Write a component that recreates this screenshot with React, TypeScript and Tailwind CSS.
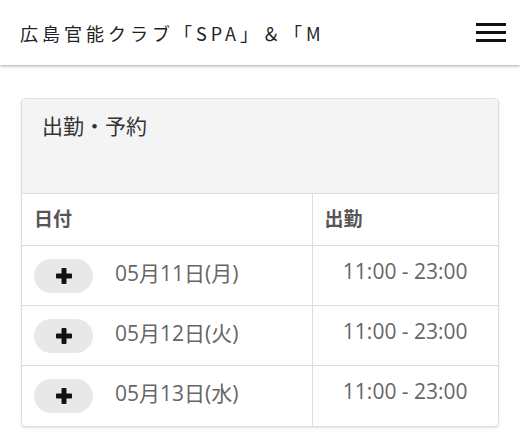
import React from "react";

const rows = [
  { date: "05月11日(月)", time: "11:00 - 23:00" },
  { date: "05月12日(火)", time: "11:00 - 23:00" },
  { date: "05月13日(水)", time: "11:00 - 23:00" },
];

function PlusIcon() {
  return (
    <svg width="18" height="18" viewBox="0 0 18 18" aria-hidden="true">
      <rect x="6.5" y="1" width="5" height="16" rx="1" fill="#111" />
      <rect x="1" y="6.5" width="16" height="5" rx="1" fill="#111" />
    </svg>
  );
}

export default function App() {
  return (
    <div className="w-[520px] h-[439px] bg-white overflow-hidden font-['Open_Sans','Noto_Sans_CJK_JP',sans-serif]">
      <header className="relative z-10 h-[65px] flex items-center justify-between pl-5 pr-[14px] bg-white shadow-[0_1px_3px_rgba(0,0,0,0.35)]">
        <h1 className="whitespace-nowrap text-[18px] tracking-[4px] text-[#222] font-['Noto_Sans_CJK_JP',sans-serif] font-normal leading-[24px]">
          広島官能クラブ「SPA」＆「M
        </h1>
        <button className="flex flex-col gap-[5px] w-[30px]" aria-label="menu">
          <span className="block h-[3px] bg-[#111]" />
          <span className="block h-[3px] bg-[#111]" />
          <span className="block h-[3px] bg-[#111]" />
        </button>
      </header>

      <main className="px-[21px] pt-[33px]">
        <div className="rounded-[4px] border border-[#ddd] overflow-hidden shadow-[0_1px_2px_rgba(0,0,0,0.12)]">
          <div className="h-[94px] bg-[#f4f4f4] px-5 pt-[12px] text-[21px] leading-[30px] text-[#333]">
            出勤・予約
          </div>
          <table className="w-full border-collapse">
            <thead>
              <tr className="h-[52px] border-t border-[#ddd]">
                <th className="w-[290px] px-3 text-left text-[19px] font-bold text-[#555] border-r border-[#ddd]">
                  日付
                </th>
                <th className="px-3 text-left text-[19px] font-bold text-[#555]">出勤</th>
              </tr>
            </thead>
            <tbody>
              {rows.map((r) => (
                <tr key={r.date} className="h-[60px] border-t border-[#ddd]">
                  <td className="px-3 border-r border-[#ddd]">
                    <div className="flex items-center gap-[22px]">
                      <button className="w-[59px] h-[34px] rounded-full bg-[#e8e8e8] flex items-center justify-center">
                        <PlusIcon />
                      </button>
                      <span className="text-[21px] text-[#666] -mt-[4px]">{r.date}</span>
                    </div>
                  </td>
                  <td className="text-center text-[21px] text-[#666]">
                    <span className="relative -top-[4px]">{r.time}</span>
                  </td>
                </tr>
              ))}
            </tbody>
          </table>
        </div>
      </main>
    </div>
  );
}
